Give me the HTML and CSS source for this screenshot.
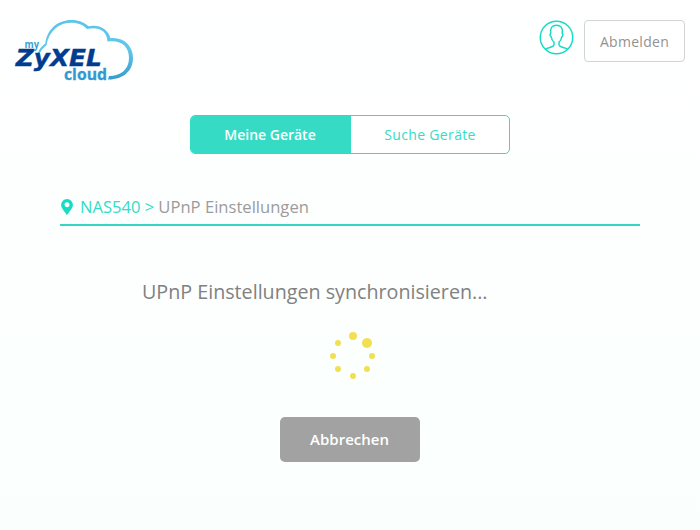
FILE: index.html
```html
<!DOCTYPE html>
<html lang="de">
<head>
<meta charset="utf-8">
<title>myZyXELcloud</title>
<link rel="stylesheet" href="styles.css">
</head>
<body>
<header class="header">
  <svg class="logo" viewBox="14 18 120 66" role="img" aria-label="myZyXELcloud">
    <defs>
      <linearGradient id="cloud" x1="0" y1="0" x2="0" y2="1">
        <stop offset="0" stop-color="#5bc4eb"/>
        <stop offset=".5" stop-color="#60c6ec"/>
        <stop offset="1" stop-color="#389bd0"/>
      </linearGradient>
    </defs>
    <path fill="url(#cloud)" d="M37.500 54C39 49 42 46 45.300 43.500C47 29 58 20 71.500 20C79 20 84.500 22.500 88.500 26.300C99 24 108 29 110.500 38.200C124 37 133 46 133 58C133 71 123 79.800 108 79.500L109 76C121 76 129 69 129 58C129 46 121 39.500 107.500 41.500C107 31 99 26.500 87 29C82 24 77 22.800 71 22.800C60 22.800 49 30 46.500 45.200C43 48 41 50 39.500 54Z"/>
    <text class="logo-my" x="24.500" y="47.800" textLength="14.500" lengthAdjust="spacingAndGlyphs">my</text>
    <text class="logo-name" x="15.800" y="66.300" textLength="86" lengthAdjust="spacingAndGlyphs">ZyXEL</text>
    <text class="logo-cloud" x="64" y="79.500" textLength="43" lengthAdjust="spacingAndGlyphs">cloud</text>
  </svg>
  <div class="account">
    <svg class="avatar" viewBox="0 0 36 36" aria-hidden="true">
      <circle cx="18" cy="18" r="16.700"/>
      <path d="M6.700 30.200C9 28 15.400 28.300 15.400 25.500V22.800C13.700 21.500 12.900 19.500 12.600 17.300C11.200 16.500 11 14.500 12.100 13.700C11.300 8 13.500 5.300 18 5.300S24.700 8 23.900 13.700C25 14.500 24.800 16.500 23.400 17.300C23.100 19.500 22.300 21.500 20.600 22.800V25.500C20.600 28.300 27 28 29.300 30.200"/>
    </svg>
    <button class="logout">Abmelden</button>
  </div>
</header>
<main class="main">
  <nav class="tabs">
    <a class="tab tab-active">Meine Geräte</a>
    <a class="tab">Suche Geräte</a>
  </nav>
  <div class="breadcrumb">
    <svg class="pin" viewBox="0 0 12 16" aria-hidden="true"><path fill-rule="evenodd" d="M6 0A5.900 5.900 0 0 0 .1 5.900C.1 9 3 11.500 6 16C9 11.500 11.900 9 11.900 5.900A5.900 5.900 0 0 0 6 0ZM6 3.200A2.500 2.500 0 1 1 6 8.200A2.500 2.500 0 0 1 6 3.200Z"/></svg>
    <span class="device">NAS540 &gt;</span>
    <span class="page">UPnP Einstellungen</span>
  </div>
  <p class="status">UPnP Einstellungen synchronisieren...</p>
  <svg class="spinner" viewBox="329 331 48 50" aria-hidden="true">
    <circle cx="353" cy="336" r="4"/>
    <circle cx="367" cy="343" r="5"/>
    <circle cx="372" cy="356" r="3"/>
    <circle cx="367" cy="369" r="3"/>
    <circle cx="353" cy="376" r="3"/>
    <circle cx="338" cy="369" r="3"/>
    <circle cx="333" cy="356" r="3"/>
    <circle cx="338" cy="343" r="3"/>
  </svg>
  <button class="cancel">Abbrechen</button>
</main>
</body>
</html>
```
FILE: styles.css
```css
* { box-sizing: border-box; }
body {
  margin: 0;
  height: 530px;
  overflow: hidden;
  font-family: "Open Sans", sans-serif;
  background: linear-gradient(#fff, #fafffe);
}
button { font-family: inherit; padding: 0; }
.header {
  display: flex;
  justify-content: space-between;
  height: 115px;
  padding: 18px 15px 0 14px;
}
.logo { width: 120px; height: 66px; }
.logo text { font-weight: 700; }
.logo-my { font-size: 10.5px; fill: #3a9fd2; }
.logo-name { font-family: "DejaVu Sans", sans-serif; font-size: 23px; font-style: italic; fill: #003c8f; stroke: #003c8f; stroke-width: .4px; }
.logo-cloud { font-size: 15.5px; fill: #3199d0; stroke: #3199d0; stroke-width: .3px; }
.account { display: flex; gap: 10px; }
.avatar { width: 35px; height: 35px; margin-top: 2px; fill: none; stroke: #16dbc5; stroke-width: 1.5; }
.logout {
  width: 101px;
  height: 42px;
  margin-top: 2px;
  border: 1px solid #d3d3d3;
  border-radius: 4px;
  background: #fff;
  color: #929292;
  font-size: 14px;
  letter-spacing: .3px;
}
.main { display: flex; flex-direction: column; align-items: center; }
.tabs {
  display: flex;
  width: 320px;
  height: 39px;
  border: 1px solid #35dbc5;
  border-radius: 5px;
  overflow: hidden;
  background: #fff;
}
.tab {
  flex: 1;
  color: #35dbc5;
  font-size: 14px;
  line-height: 37px;
  letter-spacing: .35px;
  text-align: center;
}
.tab-active { flex: 0 0 160px; padding-right: 2px; background: #35dbc5; color: #fff; font-weight: 600; letter-spacing: 0; }
.breadcrumb {
  display: flex;
  align-items: center;
  width: 580px;
  height: 37px;
  margin-top: 35px;
  border-bottom: 2px solid #35d5c3;
  font-size: 16.6px;
  white-space: pre;
}
.pin { width: 12px; height: 16px; margin: 0 7px 0 1px; fill: #16dbc5; }
.device { color: #35dbc5; margin-right: 4px; }
.page { color: #9b9b9b; }
.status {
  align-self: flex-start;
  margin: 52px 0 0 142px;
  color: #818181;
  font-size: 19.7px;
  line-height: 28px;
  white-space: nowrap;
}
.spinner { width: 48px; height: 50px; margin: 25px 0 0 6px; fill: #f2e052; }
.cancel {
  width: 140px;
  height: 45px;
  margin-top: 36px;
  border: 0;
  border-radius: 5px;
  background: #a2a2a2;
  color: #fff;
  padding: 0 1px 2px 0;
  font-size: 15px;
  font-weight: 600;
}
```
